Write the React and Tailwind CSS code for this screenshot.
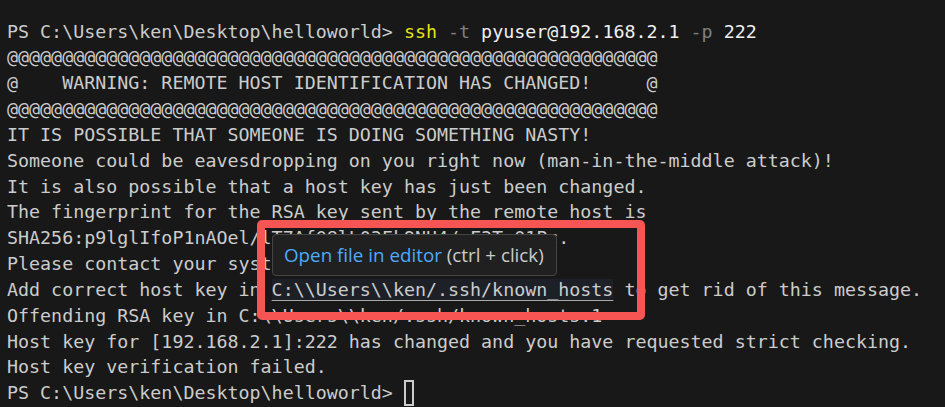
import React from "react";

const AT = "@".repeat(59);

function Line({ children }) {
  return <div className="h-[25.85px] leading-[25.85px] whitespace-pre">{children}</div>;
}

export default function App() {
  return (
    <div className="relative w-[945px] h-[407px] overflow-hidden bg-[#181818]">
      <div
        className="pl-[7px] pt-[18.5px] text-[#cccccc] text-[18.32px]"
        style={{ fontFamily: '"DejaVu Sans Mono", "Liberation Mono", monospace' }}
      >
        <Line>
          {"PS C:\\Users\\ken\\Desktop\\helloworld> "}
          <span className="text-[#e5e510]">ssh</span>{" "}
          <span className="text-[#808080]">-t</span>{" "}
          <span className="text-[#f0f0f0]">pyuser@192.168.2.1</span>{" "}
          <span className="text-[#808080]">-p</span>{" "}
          <span className="text-[#f0f0f0]">222</span>
        </Line>
        <Line>{AT}</Line>
        <Line>{"@    WARNING: REMOTE HOST IDENTIFICATION HAS CHANGED!     @"}</Line>
        <Line>{AT}</Line>
        <Line>IT IS POSSIBLE THAT SOMEONE IS DOING SOMETHING NASTY!</Line>
        <Line>Someone could be eavesdropping on you right now (man-in-the-middle attack)!</Line>
        <Line>It is also possible that a host key has just been changed.</Line>
        <Line>The fingerprint for the RSA key sent by the remote host is</Line>
        <Line>SHA256:p9lglIfoP1nAOel/lT7AfQ8lL03Fk9NU4/sF3TrQ1Pc.</Line>
        <Line>Please contact your system administrator.</Line>
        <Line>
          {"Add correct host key in "}
          <span className="bg-[#1d2127] underline decoration-[#aaaaaa] underline-offset-[4px]">
            {"C:\\\\Users\\\\ken/.ssh/known_hosts"}
          </span>
          {" to get rid of this message."}
        </Line>
        <Line>{"Offending RSA key in C:\\\\Users\\\\ken/.ssh/known_hosts:1"}</Line>
        <Line>Host key for [192.168.2.1]:222 has changed and you have requested strict checking.</Line>
        <Line>Host key verification failed.</Line>
        <Line>
          {"PS C:\\Users\\ken\\Desktop\\helloworld> "}
          <span className="inline-block align-middle w-[10px] h-[26px] border-2 border-[#cccccc] -mt-[2px]"></span>
        </Line>
      </div>

      {/* tooltip */}
      <div
        className="absolute left-[272px] top-[234px] w-[285px] h-[42px] flex items-center px-[11px] bg-[#202020] border border-[#454545] rounded-[4px] text-[18.8px] whitespace-nowrap"
        style={{ fontFamily: '"Open Sans", "Noto Sans", sans-serif' }}
      >
        <span className="text-[#4daafc]">Open file in editor</span>
        <span className="text-[#cccccc]">&nbsp;(ctrl + click)</span>
      </div>

      {/* red annotation box */}
      <div className="absolute left-[257px] top-[220px] w-[388px] h-[100px] border-[8px] border-[#f75454] rounded-[5px]"></div>
    </div>
  );
}
